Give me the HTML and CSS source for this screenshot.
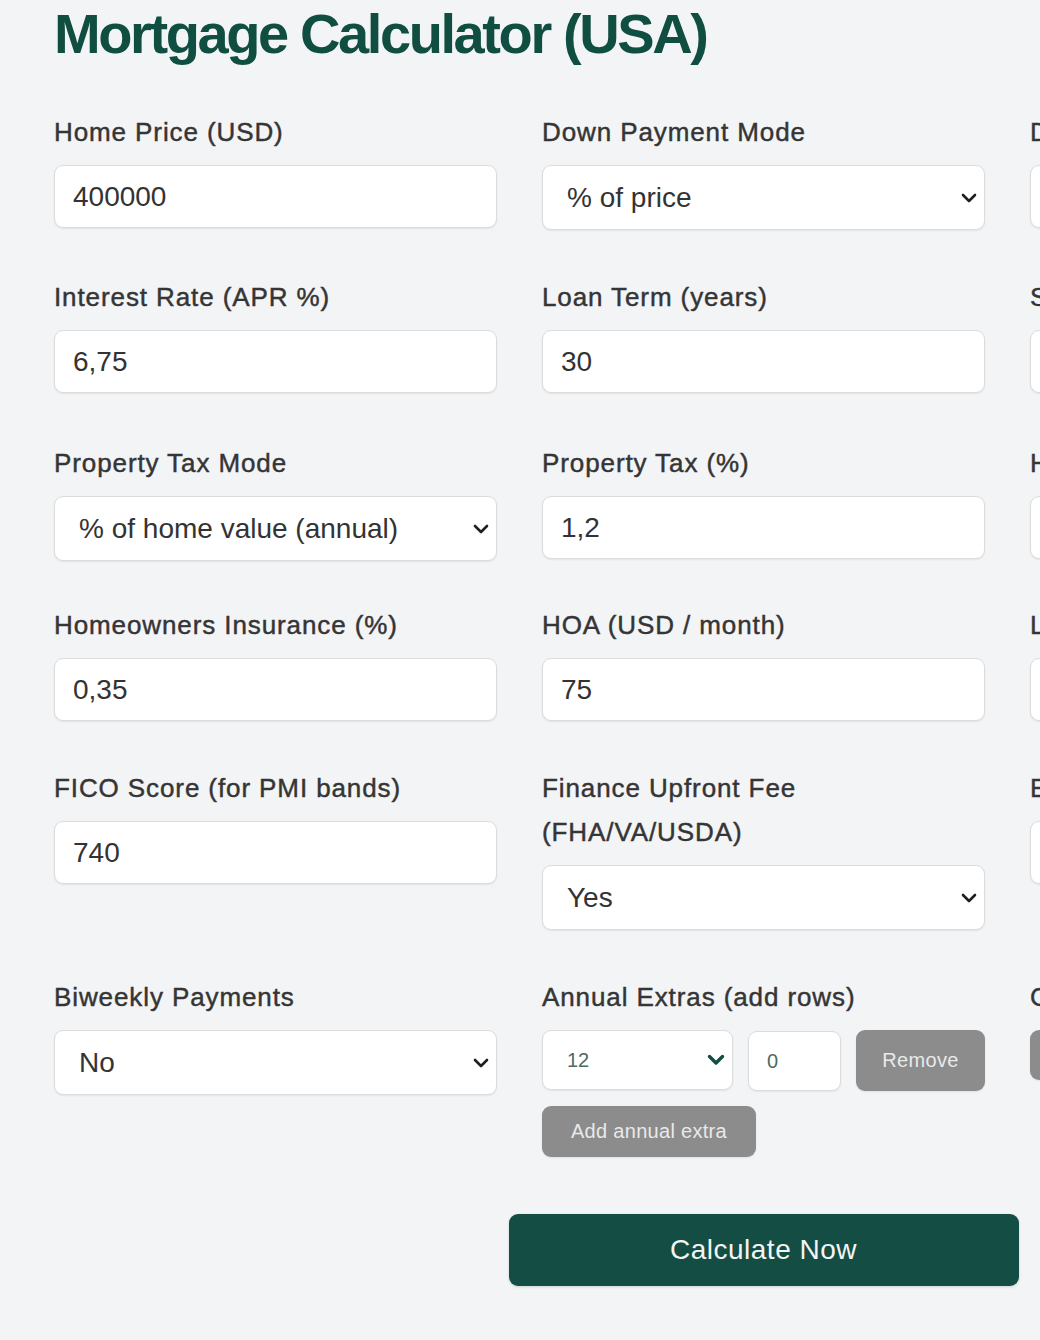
FILE: index.html
```html
<!DOCTYPE html>
<html lang="en">
<head>
<meta charset="utf-8">
<title>Mortgage Calculator (USA)</title>
<link rel="stylesheet" href="styles.css">
</head>
<body>
<div class="page">
  <h1 class="title">Mortgage Calculator (USA)</h1>
  <form class="calc">
    <div class="grid">
      <div class="field">
        <label class="label">Home Price (USD)</label>
        <input class="control" type="text" value="400000">
      </div>
      <div class="field">
        <label class="label">Down Payment Mode</label>
        <div class="select-wrap">
          <select class="control select"><option>% of price</option></select>
          <svg class="chev" viewBox="0 0 16 10" width="16" height="10"><path d="M2 2 L8 8 L14 2" fill="none" stroke="currentColor" stroke-width="2.6" stroke-linecap="round" stroke-linejoin="round"/></svg>
        </div>
      </div>
      <div class="field">
        <label class="label">Down Payment (%)</label>
        <input class="control" type="text" value="20">
      </div>

      <div class="field">
        <label class="label">Interest Rate (APR %)</label>
        <input class="control" type="text" value="6,75">
      </div>
      <div class="field">
        <label class="label">Loan Term (years)</label>
        <input class="control" type="text" value="30">
      </div>
      <div class="field">
        <label class="label">Start Month</label>
        <input class="control" type="text" value="1">
      </div>

      <div class="field row-shift">
        <label class="label">Property Tax Mode</label>
        <div class="select-wrap">
          <select class="control select"><option>% of home value (annual)</option></select>
          <svg class="chev" viewBox="0 0 16 10" width="16" height="10"><path d="M2 2 L8 8 L14 2" fill="none" stroke="currentColor" stroke-width="2.6" stroke-linecap="round" stroke-linejoin="round"/></svg>
        </div>
      </div>
      <div class="field row-shift">
        <label class="label">Property Tax (%)</label>
        <input class="control" type="text" value="1,2">
      </div>
      <div class="field row-shift">
        <label class="label">Home Value Growth (%)</label>
        <input class="control" type="text" value="3">
      </div>

      <div class="field">
        <label class="label">Homeowners Insurance (%)</label>
        <input class="control" type="text" value="0,35">
      </div>
      <div class="field">
        <label class="label">HOA (USD / month)</label>
        <input class="control" type="text" value="75">
      </div>
      <div class="field">
        <label class="label">Loan Type</label>
        <input class="control" type="text" value="Conventional">
      </div>

      <div class="field">
        <label class="label">FICO Score (for PMI bands)</label>
        <input class="control" type="text" value="740">
      </div>
      <div class="field">
        <label class="label">Finance Upfront Fee<br>(FHA/VA/USDA)</label>
        <div class="select-wrap">
          <select class="control select"><option>Yes</option></select>
          <svg class="chev" viewBox="0 0 16 10" width="16" height="10"><path d="M2 2 L8 8 L14 2" fill="none" stroke="currentColor" stroke-width="2.6" stroke-linecap="round" stroke-linejoin="round"/></svg>
        </div>
      </div>
      <div class="field">
        <label class="label">Extra Monthly Payment (USD)</label>
        <input class="control" type="text" value="0">
      </div>

      <div class="field">
        <label class="label">Biweekly Payments</label>
        <div class="select-wrap">
          <select class="control select"><option>No</option></select>
          <svg class="chev" viewBox="0 0 16 10" width="16" height="10"><path d="M2 2 L8 8 L14 2" fill="none" stroke="currentColor" stroke-width="2.6" stroke-linecap="round" stroke-linejoin="round"/></svg>
        </div>
      </div>
      <div class="field">
        <label class="label">Annual Extras (add rows)</label>
        <div class="extras-row">
          <div class="select-wrap small-wrap">
            <select class="mini mini-select"><option>12</option></select>
            <svg class="chev chev-green" viewBox="0 0 18 12" width="18" height="12"><path d="M2.5 2.5 L9 9 L15.5 2.5" fill="none" stroke="currentColor" stroke-width="3.4" stroke-linecap="round" stroke-linejoin="round"/></svg>
          </div>
          <input class="mini mini-input" type="text" value="0">
          <button type="button" class="btn-gray btn-remove">Remove</button>
        </div>
        <button type="button" class="btn-gray btn-add">Add annual extra</button>
      </div>
      <div class="field">
        <label class="label">Custom One-time Extras</label>
        <button type="button" class="btn-gray btn-add">Add one-time extra</button>
      </div>
    </div>
    <div class="actions">
      <button type="button" class="btn-primary">Calculate Now</button>
    </div>
  </form>
</div>
</body>
</html>
```

FILE: styles.css
```css
html, body {
  margin: 0;
  padding: 0;
  overflow-x: hidden;
  background: #f3f4f6;
}

body {
  font-family: "Liberation Sans", Arial, sans-serif;
  color: #3a3a3a;
}

.page {
  width: 1419px;
  padding: 0 0 40px 54px;
}

.title {
  margin: 0 0 43px 0;
  font-size: 56px;
  line-height: 67px;
  font-weight: 700;
  letter-spacing: -2.4px;
  color: #114e42;
}

.grid {
  display: grid;
  grid-template-columns: repeat(3, 443px);
  column-gap: 45px;
  row-gap: 45px;
  align-items: start;
}

.field {
  display: flex;
  flex-direction: column;
  align-items: stretch;
}

.row-shift {
  margin-top: 3px;
  margin-bottom: -3px;
}

.label {
  display: block;
  font-size: 26px;
  line-height: 44px;
  letter-spacing: 0.9px;
  color: #353535;
  -webkit-text-stroke: 0.45px #353535;
  margin-bottom: 11px;
  white-space: nowrap;
}

.control {
  box-sizing: border-box;
  width: 100%;
  height: 63px;
  margin: 0;
  padding: 0 18px;
  border: 1px solid #dcdcdc;
  border-radius: 9px;
  background: #ffffff;
  box-shadow: 0 1px 2px rgba(0, 0, 0, 0.07);
  font-family: "Liberation Sans", Arial, sans-serif;
  font-size: 28px;
  color: #333333;
  outline: none;
}

.select-wrap {
  position: relative;
}

.select {
  -webkit-appearance: none;
  appearance: none;
  height: 65px;
  padding: 0 40px 0 24px;
}

.chev {
  position: absolute;
  right: 8px;
  top: 50%;
  margin-top: -5px;
  color: #1f1f1f;
  pointer-events: none;
}

.chev-green {
  color: #134d43;
  margin-top: -6px;
}

.extras-row {
  display: flex;
  align-items: flex-start;
  gap: 15px;
}

.small-wrap {
  width: 191px;
  flex: none;
}

.mini {
  box-sizing: border-box;
  height: 60px;
  margin: 0;
  border: 1px solid #dcdcdc;
  border-radius: 9px;
  background: #ffffff;
  box-shadow: 0 1px 2px rgba(0, 0, 0, 0.07);
  font-family: "Liberation Sans", Arial, sans-serif;
  font-size: 20px;
  color: #4d6b61;
  outline: none;
}

.mini-select {
  -webkit-appearance: none;
  appearance: none;
  width: 100%;
  padding: 0 30px 0 24px;
}

.mini-input {
  width: 93px;
  flex: none;
  padding: 0 18px;
  margin-top: 1px;
}

.btn-gray {
  box-sizing: border-box;
  border: none;
  border-radius: 9px;
  background: #8c8c8c;
  color: #e9e9e9;
  font-family: "Liberation Sans", Arial, sans-serif;
  font-size: 20px;
  letter-spacing: 0.3px;
  cursor: pointer;
  box-shadow: 0 1px 2px rgba(0, 0, 0, 0.08);
}

.btn-remove {
  width: 129px;
  height: 61px;
  flex: none;
}

.btn-add {
  align-self: flex-start;
  width: 214px;
  height: 51px;
  margin-top: 15px;
  padding: 0;
}

.field > .label + .btn-add {
  margin-top: 0;
  height: 50px;
}

.actions {
  display: flex;
  justify-content: center;
  margin-top: 57px;
}

.btn-primary {
  width: 510px;
  height: 72px;
  border: none;
  border-radius: 9px;
  background: #134d43;
  color: #f4f4f4;
  font-family: "Liberation Sans", Arial, sans-serif;
  font-size: 28px;
  letter-spacing: 0.5px;
  cursor: pointer;
  box-shadow: 0 1px 3px rgba(0, 0, 0, 0.15);
}
```
